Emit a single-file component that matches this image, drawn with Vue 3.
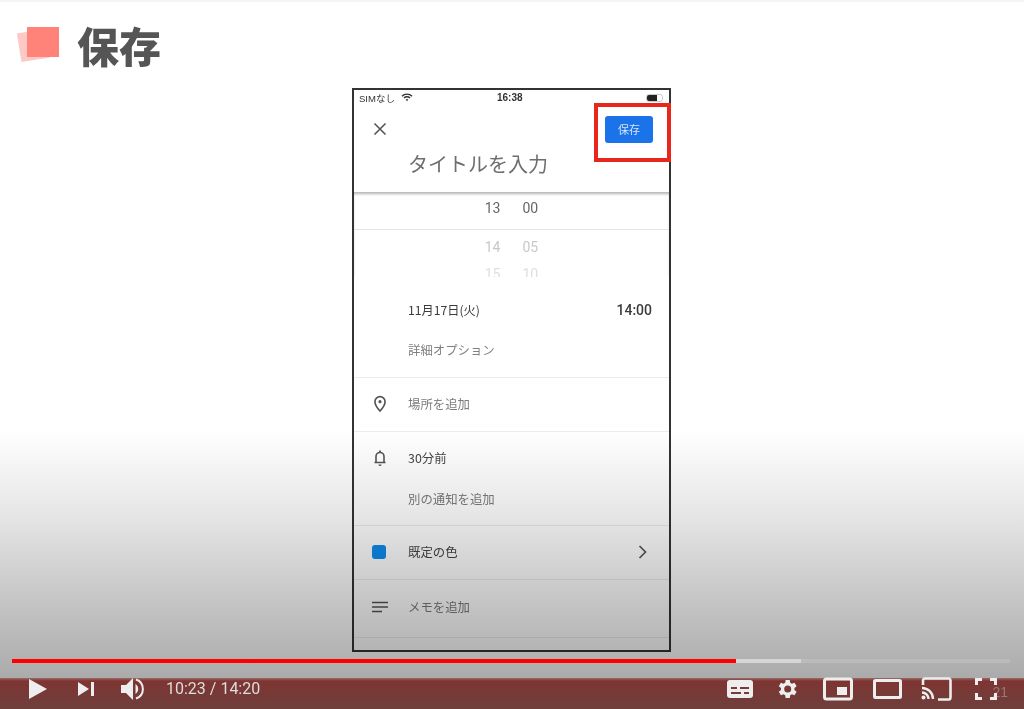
<template>
  <div class="slide">
    <header class="slide-head">
      <span class="mark"><i class="mark-back"></i><i class="mark-front"></i></span>
      <h1>保存</h1>
    </header>

    <main class="stage">
      <section class="phone">
        <div class="status">
          <span class="carrier">
            SIMなし
            <svg width="12" height="9" viewBox="0 0 12 9"><path d="M1 3.200a7 7 0 0 1 10 0M3 5a4.200 4.200 0 0 1 6 0" fill="none" stroke="#333" stroke-width="1.400"/><path d="M4.700 6.600a1.800 1.800 0 0 1 2.600 0L6 8.200z" fill="#333"/></svg>
          </span>
          <b class="clock">16:38</b>
          <span class="battery"><i></i></span>
        </div>

        <div class="top-bar">
          <svg class="close" width="14" height="14" viewBox="0 0 14 14"><path d="M1.500 1.500l11 11M12.500 1.500l-11 11" stroke="#555" stroke-width="1.600" fill="none"/></svg>
          <button class="save-btn">保存</button>
        </div>
        <div class="title-input">タイトルを入力</div>

        <div class="picker">
          <div class="pick-row current"><span>13</span><span>00</span></div>
          <div class="pick-row following"><span>14</span><span>05</span></div>
          <div class="pick-row last"><span>15</span><span>10</span></div>
        </div>

        <div class="date-row"><span>11月17日(火)</span><span class="time">14:00</span></div>
        <div class="row plain option">詳細オプション</div>

        <div class="row line muted">
          <svg class="ico pin" width="14" height="18" viewBox="0 0 16 20"><path d="M8 1.500a5.800 5.800 0 0 0-5.800 5.800C2.200 11.500 8 18 8 18s5.800-6.500 5.800-10.700A5.800 5.800 0 0 0 8 1.500z" fill="none" stroke="#555" stroke-width="1.900"/><circle cx="8" cy="7.300" r="1.800" fill="#555"/></svg>
          <span>場所を追加</span>
        </div>

        <div class="row line">
          <svg class="ico" width="16" height="20" viewBox="0 0 16 20"><path d="M2.500 14.500h11M4 14.500V8.500a4 4 0 0 1 8 0v6" fill="none" stroke="#555" stroke-width="1.600"/><path d="M8 2.500v2" stroke="#555" stroke-width="1.800"/><path d="M6.500 16.500h3a1.500 1.500 0 0 1-3 0z" fill="#555"/></svg>
          <span>30分前</span>
        </div>
        <div class="row plain extra muted">別の通知を追加</div>

        <div class="row line">
          <span class="ico-wrap"><i class="swatch"></i></span>
          <span>既定の色</span>
          <svg class="chevron" width="10" height="14" viewBox="0 0 10 14"><path d="M1.500 1l6 6-6 6" fill="none" stroke="#555" stroke-width="1.700"/></svg>
        </div>

        <div class="row line muted memo">
          <svg class="ico" width="16" height="12" viewBox="0 0 16 12"><path d="M0 1.500h16M0 6h16M0 10.500h10" stroke="#555" stroke-width="1.500"/></svg>
          <span>メモを追加</span>
        </div>
      </section>
    </main>

    <div class="highlight"></div>
    <div class="fade"></div>

    <footer class="player">
      <div class="progress">
        <div class="buffered"></div>
        <div class="played"></div>
      </div>
      <div class="controls">
        <div class="left">
          <svg class="play" width="20" height="22" viewBox="0 0 20 22"><path d="M1 1l18 10L1 21z" fill="#eee"/></svg>
          <svg class="next" width="18" height="16" viewBox="0 0 18 16"><path d="M1 1l11 7-11 7z" fill="#eee"/><path d="M14 1h3v14h-3z" fill="#eee"/></svg>
          <svg class="vol" width="26" height="26" viewBox="0 0 26 26"><path d="M1 9h5l7-7v22l-7-7H1z" fill="#eee"/><path d="M15.500 8a6 6 0 0 1 0 10z" fill="#eee"/><path d="M16 3.500a10 10 0 0 1 0 19" fill="none" stroke="#eee" stroke-width="2"/></svg>
          <span class="times">10:23 / 14:20</span>
        </div>
        <div class="right">
          <svg class="cc" width="26" height="20" viewBox="0 0 26 20"><rect x="0" y="1" width="26" height="18" rx="3" fill="#eee"/><path d="M4 9h6M13 9h9M4 14h10M17 14h5" stroke="#7a3b38" stroke-width="2"/></svg>
          <svg class="gear" width="24" height="24" viewBox="0 0 24 24"><path fill="#eee" fill-rule="evenodd" d="M19.400 13a7.600 7.600 0 0 0 0-2l2.200-1.700-2.100-3.600-2.600 1a7.500 7.500 0 0 0-1.700-1L14.800 2.900h-4.200l-.4 2.800a7.500 7.500 0 0 0-1.700 1l-2.600-1-2.100 3.600L6 11a7.600 7.600 0 0 0 0 2l-2.200 1.700 2.100 3.600 2.600-1c.5.400 1.100.7 1.700 1l.4 2.800h4.200l.4-2.800c.6-.3 1.200-.6 1.700-1l2.600 1 2.100-3.600zM12.700 15.500a3.500 3.500 0 1 1 0-7 3.500 3.500 0 0 1 0 7z"/></svg>
          <svg class="mini" width="30" height="24" viewBox="0 0 30 24"><rect x="1.500" y="2" width="27" height="20" rx="2" fill="none" stroke="#eee" stroke-width="3"/><rect x="14" y="10" width="10" height="8" fill="#eee"/></svg>
          <svg class="theater" width="29" height="20" viewBox="0 0 29 20"><rect x="1.500" y="1.500" width="26" height="17" rx="1" fill="none" stroke="#eee" stroke-width="3"/></svg>
          <svg class="cast" width="31" height="24" viewBox="0 0 31 24"><path d="M2 8V3.500A2 2 0 0 1 4 1.500h24a2 2 0 0 1 1.500 2v17a2 2 0 0 1-1.500 2H17" fill="none" stroke="#eee" stroke-width="2.600"/><path d="M1 11a11 11 0 0 1 11 11M1 15.500a6.500 6.500 0 0 1 6.500 6.500" fill="none" stroke="#eee" stroke-width="2.400"/><circle cx="2.500" cy="20.500" r="2" fill="#eee"/></svg>
          <svg class="full" width="22" height="22" viewBox="0 0 22 22"><path d="M1.500 7V1.500H7M15 1.500h5.500V7M20.500 15v5.500H15M7 20.500H1.500V15" fill="none" stroke="#eee" stroke-width="3"/></svg>
        </div>
        <span class="page-no">21</span>
      </div>
    </footer>
  </div>
</template>

<script setup>
</script>

<style scoped>
.slide {
  position: relative;
  height: 709px;
  overflow: hidden;
  background: #fff;
  font-family: "Noto Sans CJK JP", "Liberation Sans", sans-serif;
  filter: blur(0.5px);
}

.slide-head {
  display: flex;
  align-items: center;
  gap: 17px;
  height: 88px;
  padding: 0 0 0 18px;
  border-top: 2px solid #f4f4f4;
  box-sizing: border-box;
}

.slide-head h1 {
  margin: 0;
  color: #555;
  font-size: 42px;
  font-weight: 900;
  line-height: 1;
}

.mark {
  position: relative;
  display: block;
  width: 42px;
  height: 38px;
}

.mark i {
  position: absolute;
  display: block;
}

.mark-back {
  left: 1px;
  top: 5px;
  width: 29px;
  height: 29px;
  background: #fdc9c4;
  transform: rotate(-9deg);
}

.mark-front {
  left: 9px;
  top: 1px;
  width: 32px;
  height: 30px;
  background: #ff8378;
}

.stage {
  display: flex;
  justify-content: center;
  padding-right: 1px;
}

.phone {
  width: 319px;
  height: 564px;
  box-sizing: border-box;
  border: 2px solid #333;
  background: #fff;
  color: #444;
  overflow: hidden;
}

.status {
  position: relative;
  display: flex;
  justify-content: space-between;
  align-items: center;
  height: 15px;
  padding: 0 6px 0 5px;
  font-size: 9.5px;
  color: #333;
}

.carrier {
  display: flex;
  align-items: center;
  gap: 6px;
  font-family: "Liberation Sans", "Noto Sans CJK JP", sans-serif;
}

.clock {
  position: absolute;
  left: 143px;
  font-size: 10px;
  font-family: "Liberation Sans", sans-serif;
}

.battery {
  display: block;
  width: 17px;
  height: 8px;
  border-radius: 3px;
  border: 1px solid #ccc;
  box-sizing: border-box;
}

.battery i {
  display: block;
  width: 10px;
  height: 6px;
  border-radius: 2px 0 0 2px;
  background: #222;
}

.top-bar {
  display: flex;
  justify-content: space-between;
  align-items: center;
  height: 38px;
  padding: 10px 16px 0 19px;
  box-sizing: border-box;
}

.save-btn {
  width: 48px;
  height: 27px;
  padding: 0;
  border: none;
  border-radius: 3px;
  background: #1a73e8;
  color: #d8e6fb;
  font-family: inherit;
  font-size: 11px;
}

.title-input {
  height: 49px;
  padding: 7px 0 0 54px;
  box-sizing: border-box;
  color: #6e6e6e;
  font-size: 20px;
  line-height: 28px;
}

.picker {
  height: 85px;
  overflow: hidden;
  box-shadow: inset 0 3px 3px -1px #b4b4b4;
  font-family: "Roboto", "Liberation Sans", sans-serif;
}

.pick-row {
  display: flex;
  justify-content: center;
  gap: 22px;
  font-size: 14px;
}

.pick-row.current {
  height: 38px;
  align-items: center;
  padding-bottom: 5px;
  border-bottom: 1px solid #e4e4e4;
  color: #666;
  box-sizing: border-box;
}

.pick-row.following {
  height: 33px;
  align-items: center;
  padding-top: 1px;
  box-sizing: border-box;
  color: #c8c8c8;
}

.pick-row.last {
  height: 18px;
  padding-top: 4px;
  box-sizing: border-box;
  color: #dedede;
  line-height: 14px;
}

.date-row {
  display: flex;
  justify-content: space-between;
  align-items: center;
  height: 33px;
  margin-top: 17px;
  padding: 0 17px 2px 54px;
  box-sizing: border-box;
  color: #3c3c3c;
  font-size: 12.2px;
}

.date-row .time {
  font-family: "Roboto", "Liberation Sans", sans-serif;
  font-size: 14px;
  font-weight: 500;
}

.row {
  display: flex;
  align-items: center;
  position: relative;
  height: 54px;
  padding-left: 54px;
  padding-bottom: 2px;
  font-size: 12.4px;
  color: #444;
}

.row.line {
  border-top: 1px solid #ececec;
  box-sizing: border-box;
}

.row.plain.option {
  height: 50px;
  padding-bottom: 4px;
  box-sizing: border-box;
  color: #808080;
}

.row.plain.extra {
  height: 40px;
  padding-bottom: 12px;
  box-sizing: border-box;
}

.row.muted {
  color: #7c7c7c;
}

.row.memo {
  height: 59px;
  border-bottom: 1px solid #ececec;
  padding-bottom: 3px;
}

.ico,
.ico-wrap {
  position: absolute;
  left: 18px;
}

.ico.pin {
  left: 19px;
}

.swatch {
  display: block;
  width: 14px;
  height: 14px;
  border-radius: 3px;
  background: #0e8cf0;
}

.chevron {
  position: absolute;
  right: 21px;
}

.highlight {
  position: absolute;
  left: 594px;
  top: 103px;
  width: 77px;
  height: 59px;
  box-sizing: border-box;
  border: 4px solid #e8261c;
}

.fade {
  position: absolute;
  left: 0;
  right: 0;
  top: 430px;
  height: 248px;
  background: linear-gradient(rgba(0, 0, 0, 0), rgba(0, 0, 0, 0.1) 35%, rgba(0, 0, 0, 0.24) 72%, rgba(0, 0, 0, 0.33));
  pointer-events: none;
}

.player {
  position: absolute;
  left: 0;
  right: 0;
  bottom: 0;
  height: 50px;
}

.progress {
  position: relative;
  height: 4px;
  margin: 0 14px 0 12px;
  background: #bbb;
}

.buffered,
.played {
  position: absolute;
  left: 0;
  top: 0;
  height: 4px;
}

.buffered {
  width: 789px;
  background: #d6d6d6;
}

.played {
  width: 724px;
  background: #f00;
}

.controls {
  position: relative;
  display: flex;
  justify-content: space-between;
  align-items: center;
  height: 31px;
  margin-top: 15px;
  padding: 0 27px 10px 28px;
  box-sizing: border-box;
  background: linear-gradient(#9a6a68, #7e3532 3px, #6e3f3c);
}

.left,
.right {
  position: relative;
  z-index: 1;
  display: flex;
  align-items: center;
}

.next {
  margin-left: 29px;
}

.vol {
  margin-left: 25px;
}

.times {
  margin-left: 20px;
  color: #ddd;
  font-family: "Roboto", "Liberation Sans", sans-serif;
  font-size: 16px;
}

.gear {
  margin-left: 22px;
}

.mini {
  margin-left: 24px;
}

.theater {
  margin-left: 20px;
}

.cast {
  margin-left: 19px;
}

.full {
  margin-left: 23px;
}

.page-no {
  position: absolute;
  right: 16px;
  top: 6px;
  color: #9a7673;
  font-family: "Liberation Sans", sans-serif;
  font-size: 14px;
}
</style>
